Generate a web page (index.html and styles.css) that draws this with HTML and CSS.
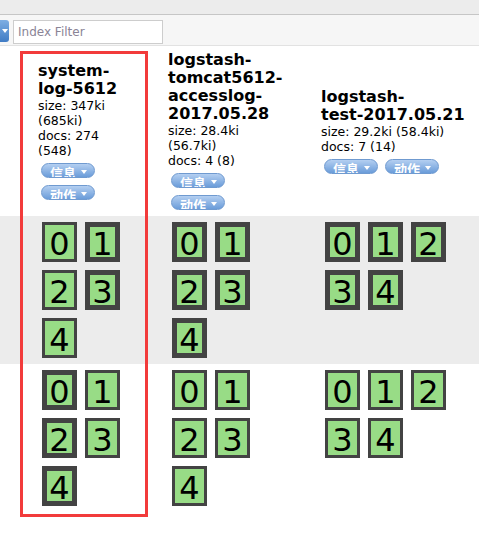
FILE: index.html
```html
<!DOCTYPE html>
<html>
<head>
<meta charset="utf-8">
<link rel="stylesheet" href="styles.css">
</head>
<body>
<div class="top-band"></div>
<div class="toolbar">
  <span class="menu-btn"><i class="caret"></i></span>
  <input class="filter" type="text" placeholder="Index Filter">
</div>
<div class="cluster">
  <div class="row head-row">
    <div class="cell node-col"></div>
    <div class="cell c1">
      <div class="title">system-<span class="nobr">log-5612</span></div>
      <div class="info">size: 347ki (685ki)</div>
      <div class="info">docs: 274 (548)</div>
      <div class="actions"><span class="btn">信息<i class="caret"></i></span><span class="btn">动作<i class="caret"></i></span></div>
    </div>
    <div class="cell c2">
      <div class="title">logstash-tomcat5612-accesslog-<wbr>2017.05.28</div>
      <div class="info">size: 28.4ki (56.7ki)</div>
      <div class="info">docs: 4 (8)</div>
      <div class="actions"><span class="btn">信息<i class="caret"></i></span><span class="btn">动作<i class="caret"></i></span></div>
    </div>
    <div class="cell c3">
      <div class="title">logstash-<span class="nobr">test-2017.05.21</span></div>
      <div class="info">size: 29.2ki (58.4ki)</div>
      <div class="info">docs: 7 (14)</div>
      <div class="actions"><span class="btn">信息<i class="caret"></i></span><span class="btn">动作<i class="caret"></i></span></div>
    </div>
  </div>
  <div class="row node-row alt">
    <div class="cell node-col"></div>
    <div class="cell c1 shards">
      <span class="shard">0</span><span class="shard primary">1</span><span class="shard">2</span><span class="shard primary">3</span><span class="shard">4</span>
    </div>
    <div class="cell c2 shards">
      <span class="shard primary">0</span><span class="shard primary">1</span><span class="shard primary">2</span><span class="shard primary">3</span><span class="shard primary">4</span>
    </div>
    <div class="cell c3 shards">
      <span class="shard primary">0</span><span class="shard primary">1</span><span class="shard primary">2</span><span class="shard primary">3</span><span class="shard primary">4</span>
    </div>
  </div>
  <div class="row node-row">
    <div class="cell node-col"></div>
    <div class="cell c1 shards">
      <span class="shard primary">0</span><span class="shard">1</span><span class="shard primary">2</span><span class="shard">3</span><span class="shard primary">4</span>
    </div>
    <div class="cell c2 shards">
      <span class="shard">0</span><span class="shard">1</span><span class="shard">2</span><span class="shard">3</span><span class="shard">4</span>
    </div>
    <div class="cell c3 shards">
      <span class="shard">0</span><span class="shard">1</span><span class="shard">2</span><span class="shard">3</span><span class="shard">4</span>
    </div>
  </div>
</div>
<div class="highlight"></div>
</body>
</html>
```
FILE: styles.css
```css
html, body {
  margin: 0;
  padding: 0;
  background: #fff;
  font-family: "DejaVu Sans", Verdana, sans-serif;
  color: #000;
}
body {
  position: relative;
  width: 479px;
  height: 533px;
  overflow: hidden;
}
.top-band {
  height: 14px;
  background: #ececec;
  border-bottom: 1px solid #c6c6c6;
}
.toolbar {
  display: flex;
  align-items: flex-start;
  gap: 4px;
  padding: 5px 0 1px 0;
  background: #f6f6f6;
  border-bottom: 1px solid #e2e2e2;
}
.menu-btn {
  box-sizing: border-box;
  width: 9px;
  height: 22px;
  background: linear-gradient(#7eaee3, #3f7bc4);
  border-radius: 0 3px 3px 0;
  display: flex;
  align-items: center;
  justify-content: flex-end;
  padding-right: 1px;
}
.caret {
  display: inline-block;
  width: 0;
  height: 0;
  border-top: 4px solid #fff;
  border-left: 3.5px solid transparent;
  border-right: 3.5px solid transparent;
}
.filter {
  box-sizing: border-box;
  width: 150px;
  height: 24px;
  margin: 0;
  border: 1px solid #cdcdcd;
  background: #fff;
  padding: 0 4px;
  font-family: "DejaVu Sans", Verdana, sans-serif;
  font-size: 12px;
  outline: none;
}
.filter::placeholder {
  color: #8a8496;
}
.row {
  display: grid;
  grid-template-columns: 38px 130px 153px 1fr;
}
.head-row {
  align-items: center;
  padding: 5px 0 6px;
}
.c1 { padding-right: 35px; }
.c2 { padding-right: 37px; }
.title {
  font-weight: bold;
  font-size: 16px;
  line-height: 18px;
}
.nobr {
  white-space: nowrap;
}
.info {
  font-size: 12.5px;
  line-height: 15px;
}
.actions {
  display: flex;
  flex-wrap: wrap;
  gap: 7px;
  padding-left: 3px;
  margin-top: 5px;
}
.btn {
  box-sizing: border-box;
  display: inline-flex;
  align-items: flex-start;
  height: 15px;
  overflow: hidden;
  padding: 1px 7px 0 8px;
  border: 1px solid #6f9ad0;
  border-radius: 8px;
  background: linear-gradient(#b4cff1, #6a9cd9);
  color: #fff;
  font-family: "Noto Sans CJK SC", sans-serif;
  font-weight: bold;
  font-size: 13px;
  line-height: 15px;
  white-space: nowrap;
}
.btn .caret {
  margin: 5px 0 0 5px;
}
.node-row {
  padding: 2px 0;
}
.alt {
  background: #ececec;
}
.shards {
  display: flex;
  flex-wrap: wrap;
  align-content: flex-start;
}
.shard {
  box-sizing: border-box;
  width: 35px;
  height: 40px;
  margin: 4px;
  border: 3px solid #434343;
  background: #98dc86;
  text-align: center;
  font-size: 32px;
  line-height: 30px;
  padding-top: 4px;
  overflow: hidden;
}
.shard.primary {
  border-width: 5px;
  padding-top: 2px;
}
.highlight {
  position: absolute;
  left: 20px;
  top: 51px;
  width: 128px;
  height: 466px;
  box-sizing: border-box;
  border: 3px solid #f23b3b;
  pointer-events: none;
}
```
